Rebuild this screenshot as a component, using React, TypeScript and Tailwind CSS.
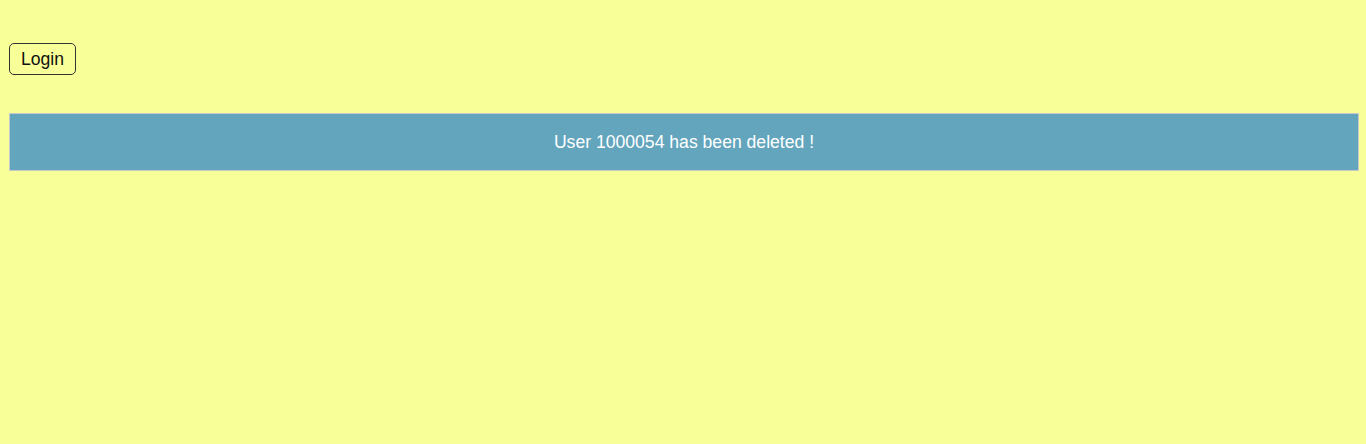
import React from "react";

export default function App() {
  return (
    <div
      className="min-h-[444px] w-full bg-[#f8ff98] px-[9px] pt-[43px]"
      style={{ fontFamily: '"Liberation Sans", Arial, sans-serif' }}
    >
      {/* Login */}
      <button
        type="button"
        className="flex h-[32px] w-[67px] items-center justify-center rounded-[5px] border border-[#333333] bg-transparent text-[17.6px] text-[#111111]"
      >
        Login
      </button>

      {/* Notice */}
      <div className="mt-[38px] flex h-[58px] w-[1350px] items-center justify-center border border-[#c8c8c8] bg-[#62a5bd] text-[17.6px] text-white">
        User 1000054 has been deleted !
      </div>
    </div>
  );
}
